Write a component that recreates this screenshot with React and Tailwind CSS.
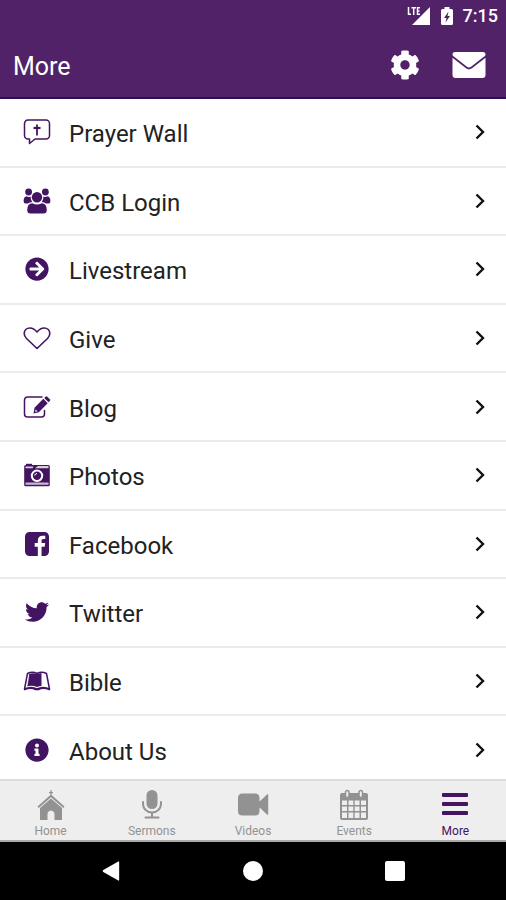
import React from 'react';
import { FaArrowCircleRight, FaCog, FaInfoCircle, FaTwitter } from 'react-icons/fa';

const PrayerIcon = () => (
  <svg viewBox="0 0 28 28" className="w-7 h-7" fill="none" stroke="currentColor">
    <path d="M5 2H23A3.500 3.500 0 0 1 26.500 5.500V17.500A3.500 3.500 0 0 1 23 21H12L6.500 25.500V21H5A3.500 3.500 0 0 1 1.500 17.500V5.500A3.500 3.500 0 0 1 5 2Z" strokeWidth="1.500" strokeLinejoin="round" />
    <path d="M14 6.500V17.500" strokeWidth="1.800" />
    <path d="M10.500 10H17.500" strokeWidth="2.200" />
  </svg>
);

const GroupIcon = () => (
  <svg viewBox="0 0 28 26" className="w-7" fill="currentColor">
    <circle cx="5.600" cy="4" r="3.400" />
    <circle cx="22.400" cy="4" r="3.400" />
    <circle cx="14" cy="9.300" r="5.200" />
    <path d="M3.500 8.300Q5.600 9.600 7.700 8.500Q7.200 11.500 9.200 14Q6.500 14 5 15.500H2.500Q.6 15.500 .6 13Q.6 9 3.500 8.300Z" />
    <path d="M24.500 8.300Q22.400 9.600 20.300 8.500Q20.800 11.500 18.800 14Q21.500 14 23 15.500H25.500Q27.400 15.500 27.400 13Q27.400 9 24.500 8.300Z" />
    <path d="M9.300 15.200Q14 18 18.700 15.200Q23.800 15.500 23.800 22Q23.800 25.500 20.500 25.500H7.500Q4.200 25.500 4.200 22Q4.200 15.500 9.300 15.200Z" />
  </svg>
);

const HeartIcon = () => (
  <svg viewBox="0 0 28 24" className="w-7 h-6" fill="none" stroke="currentColor" strokeWidth="1.600" strokeLinejoin="round">
    <path d="M14 22.500L3.500 12.500C1.800 10.800 1.200 9.300 1.200 7.600C1.200 4.300 3.500 2 7 2C10.300 2 12.300 4 14 6C15.700 4 17.700 2 21 2C24.500 2 26.800 4.300 26.800 7.600C26.800 9.300 26.200 10.800 24.500 12.500Z" />
  </svg>
);

const BlogIcon = () => (
  <svg viewBox="0 0 28 24" className="w-7 h-6" fill="none" stroke="currentColor">
    <path d="M19 2H4.500A3 3 0 0 0 1.500 5V19A3 3 0 0 0 4.500 22H18.500A3 3 0 0 0 21.500 19V15.500" strokeWidth="1.500" strokeLinecap="round" />
    <path fillRule="evenodd" d="M20.300 3.800L24.700 8.200L15.800 17.200L10.500 18.500L11.500 12.800ZM12.600 14.600L12.200 16.900L14.500 16.300Z" fill="currentColor" stroke="none" />
    <path d="M21.200 3L22.500 1.700Q23.400 .9 24.300 1.700L26.800 4.200Q27.600 5.100 26.800 6L25.500 7.300Z" fill="currentColor" stroke="none" />
  </svg>
);

const CameraIcon = () => (
  <svg viewBox="0 0 28 24" className="w-7 h-6">
    <path d="M3 2V.8H9V2Z" fill="currentColor" />
    <rect x="1.200" y="2" width="25.600" height="21.200" rx="1.500" fill="currentColor" />
    <path d="M2.500 3.500H10.500L9.500 5.300H2.500ZM13 4.500L15 3H25.500V5.300H12Z" fill="white" opacity=".8" />
    <path d="M2.500 19.500H25.500V21.800H2.500Z" fill="white" opacity=".7" />
    <circle cx="14" cy="12.800" r="5.200" fill="currentColor" stroke="white" strokeWidth="2" />
    <path d="M11.800 12.600A2.200 2.200 0 0 1 14 10.500" fill="none" stroke="white" />
  </svg>
);

const FacebookIcon = () => (
  <svg viewBox="0 0 1536 1536" className="w-6 h-6" fill="currentColor">
    <path d="M1248 0q119 0 203.500 84.500T1536 288v960q0 119-84.500 203.500T1248 1536h-188V941h199l30-232h-229V561q0-56 23.500-84t91.500-28l122-1V241q-63-9-178-9-136 0-217.500 80T820 538v171H620v232h200v595H288q-119 0-203.500-84.500T0 1248V288Q0 169 84.500 84.500T288 0h960z" />
  </svg>
);

const BookIcon = () => (
  <svg viewBox="0 0 28 20" className="w-7 h-5" fill="none" stroke="currentColor">
    <path d="M4.500 2.500Q9.500 -.2 14 2.500Q18.500 -.2 23.500 2.500L26.500 18Q20 14.800 14 18Q8 14.800 1.500 18Z" strokeWidth="1.500" strokeLinejoin="round" />
    <path d="M6 3Q10 1.500 14 3L18.500 2V15Q16 15 14 16Q9.500 14 4 15.200Z" fill="currentColor" stroke="none" />
    <path d="M5.800 4L4.200 14.500" stroke="white" strokeWidth=".7" />
    <path d="M1 18.800Q8 16 12.500 18.500H15.500Q20 16 27 18.800" strokeWidth="1.500" />
  </svg>
);

const ITEMS = [
  { label: 'Prayer Wall', icon: <PrayerIcon /> },
  { label: 'CCB Login', icon: <GroupIcon /> },
  { label: 'Livestream', icon: <FaArrowCircleRight className="w-6 h-6" /> },
  { label: 'Give', icon: <HeartIcon /> },
  { label: 'Blog', icon: <BlogIcon /> },
  { label: 'Photos', icon: <CameraIcon /> },
  { label: 'Facebook', icon: <FacebookIcon /> },
  { label: 'Twitter', icon: <FaTwitter className="w-6 h-6" /> },
  { label: 'Bible', icon: <BookIcon /> },
  { label: 'About Us', icon: <FaInfoCircle className="w-6 h-6" /> },
];

const HomeIcon = () => (
  <svg viewBox="0 0 28 32" className="w-7 h-8" fill="currentColor">
    <path d="M13.400 1H14.600V3H16V4.200H14.600V6L27.500 17.500L26.300 19L14 8.300L1.700 19L.5 17.500L13.400 6V4.200H12V3H13.400Z" />
    <path d="M14 9.500L25 19V31H17.500V25Q17.500 22 14 21.500Q10.500 22 10.500 25V31H3V19Z" />
  </svg>
);

const MicIcon = () => (
  <svg viewBox="0 0 24 32" className="w-6 h-8" fill="none" stroke="currentColor" strokeWidth="2">
    <rect x="6.500" y="1" width="11" height="19" rx="5.500" fill="currentColor" stroke="none" />
    <path d="M3 13V15A9 8.500 0 0 0 21 15V13M12 23.500V28M5.500 28.500H18.500" strokeLinecap="round" />
  </svg>
);

const VideoIcon = () => (
  <svg viewBox="0 0 32 32" className="w-8 h-8" fill="currentColor">
    <path d="M5.500 4.500H18Q22.500 4.500 22.500 9V12.500L30 5.500Q31.200 4.500 31.200 6V25Q31.200 26.500 30 25.500L22.500 18.500V22Q22.500 26.500 18 26.500H5.500Q1 26.500 1 22V9Q1 4.500 5.500 4.500Z" />
  </svg>
);

const CalendarIcon = () => (
  <svg viewBox="0 0 30 32" className="w-8 h-8" fill="none" stroke="currentColor">
    <path fillRule="evenodd" d="M3 4H27Q29 4 29 6V29Q29 31 27 31H3Q1 31 1 29V6Q1 4 3 4ZM3 11.500V16H8V11.500ZM9.500 11.500V16H14.300V11.500ZM15.700 11.500V16H20.500V11.500ZM22 11.500V16H27V11.500ZM3 17.500V22H8V17.500ZM9.500 17.500V22H14.300V17.500ZM15.700 17.500V22H20.500V17.500ZM22 17.500V22H27V17.500ZM3 23.500V29H8V23.500ZM9.500 23.500V29H14.300V23.500ZM15.700 23.500V29H20.500V23.500ZM22 23.500V29H27V23.500Z" fill="currentColor" stroke="none" />
    <rect x="6.500" y="1.500" width="3.500" height="7" rx="1.700" fill="#eeeeee" strokeWidth="1.500" />
    <rect x="20" y="1.500" width="3.500" height="7" rx="1.700" fill="#eeeeee" strokeWidth="1.500" />
  </svg>
);

const MenuIcon = () => (
  <svg viewBox="0 0 28 32" className="w-7 h-8" fill="currentColor">
    <rect x="1" y="4" width="26" height="4" rx="1" />
    <rect x="1" y="13" width="26" height="4" rx="1" />
    <rect x="1" y="22" width="26" height="4" rx="1" />
  </svg>
);

const TABS = [
  { label: 'Home', icon: <HomeIcon /> },
  { label: 'Sermons', icon: <MicIcon /> },
  { label: 'Videos', icon: <VideoIcon /> },
  { label: 'Events', icon: <CalendarIcon /> },
  { label: 'More', icon: <MenuIcon />, active: true },
];

const StatusBar = () => (
  <div className="flex items-center justify-end h-8 pr-2 text-white">
    <svg viewBox="0 0 24 20" className="w-6 h-5 mr-2" fill="none" stroke="currentColor">
      <path d="M23 1V19H5Z" fill="currentColor" stroke="none" />
      <path d="M1.500 1V8.200H4M4.500 1.800H9M6.700 1.800V9M13 1.800H10.500V8.200H13M10.500 5H12.500" strokeWidth="1.500" />
    </svg>
    <svg viewBox="0 0 14 20" className="w-4 h-5 mr-2" fill="currentColor">
      <path fillRule="evenodd" d="M4.500 1H9.500V3H11.500Q13 3 13 4.500V17.500Q13 19 11.500 19H2.500Q1 19 1 17.500V4.500Q1 3 2.500 3H4.500ZM8.500 5.500L4 12H6.500L5.500 16.500L10 10H7.500Z" />
    </svg>
    <span className="text-lg font-medium">7:15</span>
  </div>
);

const Header = () => (
  <header className="flex flex-col h-[99px] shrink-0 bg-[#512268] border-b-2 border-[#29105a]">
    <StatusBar />
    <div className="flex flex-1 items-center pl-[13px] pr-5 text-white">
      <h1 className="flex-1 pt-1 text-[25px]">More</h1>
      <button type="button" aria-label="Settings" className="mr-8">
        <FaCog className="w-[30px] h-[30px]" />
      </button>
      <button type="button" aria-label="Messages">
        <svg viewBox="0 0 34 28" className="w-[34px] h-7" fill="currentColor">
          <path d="M3 1H31Q33.500 1 33.500 3.500Q33.500 4.500 32.500 5.300L19 15.700Q17 17.200 15 15.700L1.500 5.300Q.5 4.500 .5 3.500Q.5 1 3 1Z" />
          <path d="M.5 6.800L14 17.300Q17 19.500 20 17.300L33.500 6.800V24Q33.500 27 30.500 27H3.500Q.5 27 .5 24Z" />
        </svg>
      </button>
    </div>
  </header>
);

const App = () => (
  <div className="flex flex-col h-screen bg-white font-['Roboto',sans-serif]">
    <Header />

    <main className="flex-1 min-h-0 overflow-y-auto [scrollbar-width:none]">
      <ul className="grid auto-rows-fr h-[686px]">
        {ITEMS.map((item) => (
          <li key={item.label} className="border-b-2 border-[#ebebeb]">
            <a href="#" className="flex items-center h-full pl-[23px] pr-5 text-[#421462]">
              <span className="flex justify-center w-7 mr-[18px]">{item.icon}</span>
              <span className="flex-1 pt-1 text-2xl text-[#222222]">{item.label}</span>
              <svg viewBox="0 0 12 16" className="w-3 h-4 text-[#111111]" fill="none" stroke="currentColor" strokeWidth="2.400">
                <path d="M2.500 1.500L9 8L2.500 14.500" />
              </svg>
            </a>
          </li>
        ))}
      </ul>
    </main>

    <nav className="grid grid-cols-5 h-[63px] shrink-0 bg-[#eeeeee] border-t-2 border-b-2 border-t-[#dddddd] border-b-[#aaaaaa]">
      {TABS.map((tab) => (
        <a
          key={tab.label}
          href="#"
          className={`flex flex-col items-center pt-2 text-xs leading-4 ${tab.active ? 'text-[#421462]' : 'text-[#929292]'}`}
        >
          {tab.icon}
          <span className="pt-0.5">{tab.label}</span>
        </a>
      ))}
    </nav>

    {/* Android system buttons */}
    <div className="flex items-center justify-center gap-[122px] h-[58px] shrink-0 bg-black text-white">
      <button type="button" aria-label="Back">
        <svg viewBox="0 0 22 22" className="w-5 h-[22px]" fill="currentColor">
          <path d="M20 1V21Q19.500 22 18.500 21.300L2.500 12Q1 11 2.500 10L18.500 .7Q19.500 0 20 1Z" />
        </svg>
      </button>
      <button type="button" aria-label="Home" className="w-5 h-5 rounded-full bg-white" />
      <button type="button" aria-label="Recent apps" className="w-5 h-5 rounded-xs bg-white" />
    </div>
  </div>
);

export default App;
